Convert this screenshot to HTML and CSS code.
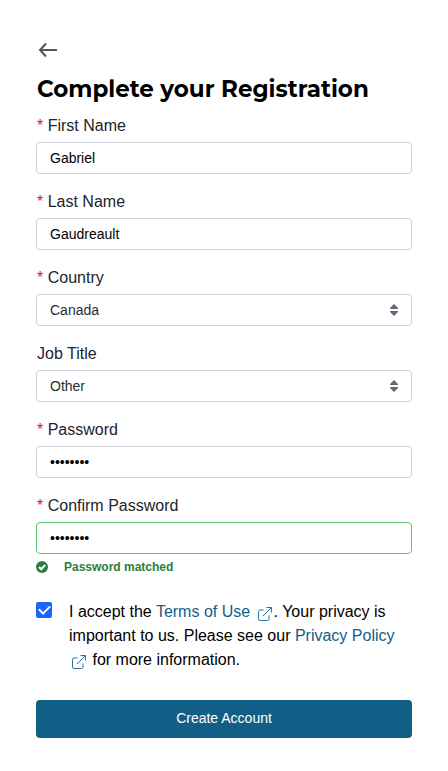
FILE: index.html
```html
<!DOCTYPE html>
<html lang="en">
<head>
<meta charset="utf-8">
<meta name="viewport" content="width=device-width, initial-scale=1">
<title>Complete your Registration</title>
<link rel="stylesheet" href="styles.css">
</head>
<body>
<main class="page">
  <button class="back" type="button" aria-label="Back">
    <svg width="20" height="16" viewBox="0 0 20 16" aria-hidden="true"><path d="M8 1.500 2 8l6 6.500M2 8h17"/></svg>
  </button>
  <h1 class="title">Complete your Registration</h1>
  <form class="form">
    <div class="field">
      <label for="first"><span class="req">*</span> First Name</label>
      <input class="control" id="first" type="text" value="Gabriel">
    </div>
    <div class="field">
      <label for="last"><span class="req">*</span> Last Name</label>
      <input class="control" id="last" type="text" value="Gaudreault">
    </div>
    <div class="field">
      <label for="country"><span class="req">*</span> Country</label>
      <div class="select">
        <select class="control" id="country"><option>Canada</option></select>
        <svg class="arrows" width="10" height="14" viewBox="0 0 10 14" aria-hidden="true"><path d="M5 1 9 5v1H1V5zM5 13 9 9V8H1v1z"/></svg>
      </div>
    </div>
    <div class="field">
      <label for="job">Job Title</label>
      <div class="select">
        <select class="control" id="job"><option>Other</option></select>
        <svg class="arrows" width="10" height="14" viewBox="0 0 10 14" aria-hidden="true"><path d="M5 1 9 5v1H1V5zM5 13 9 9V8H1v1z"/></svg>
      </div>
    </div>
    <div class="field">
      <label for="password"><span class="req">*</span> Password</label>
      <input class="control" id="password" type="password" value="password">
    </div>
    <div class="field">
      <label for="confirm"><span class="req">*</span> Confirm Password</label>
      <input class="control valid" id="confirm" type="password" value="password">
    </div>
    <p class="match">
      <svg width="12" height="12" viewBox="0 0 12 12" aria-hidden="true"><circle cx="6" cy="6" r="6"/><path d="m3 6 2.200 2.200L9.200 4"/></svg>
      Password matched
    </p>
    <div class="terms">
      <input class="check" id="accept" type="checkbox" checked>
      <div class="terms-text"><label for="accept">I accept the</label> <a href="#terms">Terms of Use <svg class="ext" width="14" height="14" viewBox="0 0 14 14" aria-hidden="true"><path d="M5.500 3H2a1.500 1.500 0 0 0-1.500 1.500V12A1.500 1.500 0 0 0 2 13.500h7.500A1.500 1.500 0 0 0 11 12V8.500M8.500.500h5v5M13.500.500 5 9"/></svg></a>. Your privacy is important to us. Please see our <a href="#privacy">Privacy Policy <svg class="ext" width="14" height="14" viewBox="0 0 14 14" aria-hidden="true"><path d="M5.500 3H2a1.500 1.500 0 0 0-1.500 1.500V12A1.500 1.500 0 0 0 2 13.500h7.500A1.500 1.500 0 0 0 11 12V8.500M8.500.500h5v5M13.500.500 5 9"/></svg></a> for more information.</div>
    </div>
    <button class="submit" type="submit">Create Account</button>
  </form>
</main>
</body>
</html>
```
FILE: styles.css
```css
* {
  box-sizing: border-box;
}

body {
  margin: 0;
  background: #fff;
  color: #22242e;
  font: 16px/24px "Liberation Sans", Arial, sans-serif;
}

.page {
  padding: 40px 36px 32px;
}

.back {
  display: flex;
  align-items: center;
  height: 20px;
  padding: 0 2px;
  border: 0;
  background: none;
}

.back svg {
  fill: none;
  stroke: #54565f;
  stroke-width: 2;
}

.title {
  margin: 13px 0 9px;
  padding-left: 1px;
  color: #000;
  font: 700 23px/32px Montserrat, Inter, sans-serif;
}

.form {
  display: flex;
  flex-direction: column;
}

.field {
  display: flex;
  flex-direction: column;
  gap: 4px;
  margin-bottom: 16px;
}

.field label {
  padding-left: 1px;
}

.req {
  color: #d4122f;
}

.control {
  width: 100%;
  height: 32px;
  padding: 0 13px;
  border: 1px solid #cfd0d8;
  border-radius: 4px;
  background: #fff;
  color: #000;
  font: 14px/20px "Liberation Sans", Arial, sans-serif;
}

.select {
  position: relative;
}

select.control {
  appearance: none;
  color: #2b2b33;
}

.arrows {
  position: absolute;
  top: 9px;
  right: 13px;
  fill: #666879;
  pointer-events: none;
}

.control.valid {
  border-color: #5cc56f;
}

.match {
  display: flex;
  align-items: center;
  gap: 16px;
  margin: -12px 0 24px;
  color: #2d7d3e;
  font-size: 12px;
  line-height: 18px;
  font-weight: 700;
}

.match circle {
  fill: #2d7d3e;
}

.match path {
  fill: none;
  stroke: #fff;
  stroke-width: 2;
}

.terms {
  display: flex;
  gap: 16px;
  margin-bottom: 28px;
  color: #000;
}

.terms-text {
  padding-left: 1px;
}

.check {
  appearance: none;
  display: flex;
  align-items: center;
  justify-content: center;
  flex: none;
  width: 16px;
  height: 16px;
  margin: 2px 0 0;
  border: 0;
  border-radius: 2px;
  background: #1a66ff;
}

.check:checked::before {
  content: "";
  width: 9px;
  height: 5px;
  margin-bottom: 3px;
  border: solid #fff;
  border-width: 0 0 2px 2px;
  transform: rotate(-45deg);
}

.terms a {
  color: #135e87;
  text-decoration: none;
}

.ext {
  margin: 0 2px 0 3px;
  vertical-align: -4px;
  fill: none;
  stroke: #2d749a;
}

.submit {
  height: 38px;
  padding: 0 6px 2px;
  border: 0;
  border-radius: 4px;
  background: #135e87;
  color: #fff;
  font: 14px/20px "Liberation Sans", Arial, sans-serif;
}
```
